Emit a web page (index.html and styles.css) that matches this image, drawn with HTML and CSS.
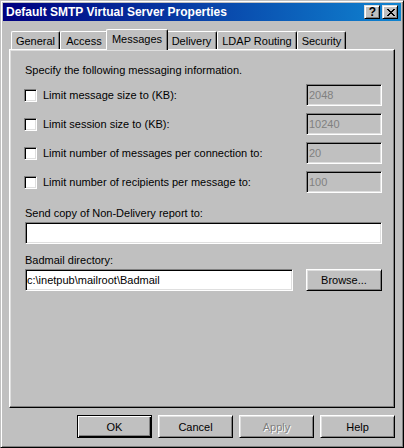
FILE: index.html
```html
<!DOCTYPE html>
<html>
<head>
<meta charset="utf-8">
<link rel="stylesheet" href="styles.css">
</head>
<body>
<div class="window">
  <div class="titlebar">
    <span class="title">Default SMTP Virtual Server Properties</span>
    <div class="caption-btns">
      <div class="cap-btn help">?</div>
      <div class="cap-btn close">
        <svg width="8" height="7" viewBox="0 0 8 7" shape-rendering="crispEdges">
          <rect x="0" y="0" width="2" height="1"/><rect x="6" y="0" width="2" height="1"/>
          <rect x="1" y="1" width="2" height="1"/><rect x="5" y="1" width="2" height="1"/>
          <rect x="2" y="2" width="4" height="1"/>
          <rect x="3" y="3" width="2" height="1"/>
          <rect x="2" y="4" width="4" height="1"/>
          <rect x="1" y="5" width="2" height="1"/><rect x="5" y="5" width="2" height="1"/>
          <rect x="0" y="6" width="2" height="1"/><rect x="6" y="6" width="2" height="1"/>
        </svg>
      </div>
    </div>
  </div>
  <div class="body">
    <div class="tabs">
      <div class="tab w-general">General</div>
      <div class="tab w-access">Access</div>
      <div class="tab selected w-messages">Messages</div>
      <div class="tab w-delivery">Delivery</div>
      <div class="tab w-ldap">LDAP Routing</div>
      <div class="tab w-security">Security</div>
    </div>
    <div class="panel">
      <div class="intro">Specify the following messaging information.</div>
      <div class="opt">
        <span class="check"></span><span class="opt-label">Limit message size to (KB):</span>
        <div class="field disabled">2048</div>
      </div>
      <div class="opt">
        <span class="check"></span><span class="opt-label">Limit session size to (KB):</span>
        <div class="field disabled">10240</div>
      </div>
      <div class="opt">
        <span class="check"></span><span class="opt-label">Limit number of messages per connection to:</span>
        <div class="field disabled">20</div>
      </div>
      <div class="opt">
        <span class="check"></span><span class="opt-label">Limit number of recipients per message to:</span>
        <div class="field disabled">100</div>
      </div>
      <div class="lbl first-lbl">Send copy of Non-Delivery report to:</div>
      <div class="field wide"></div>
      <div class="lbl second-lbl">Badmail directory:</div>
      <div class="dir-row">
        <div class="field dir">c:\inetpub\mailroot\Badmail</div>
        <div class="btn browse">Browse...</div>
      </div>
    </div>
    <div class="buttons">
      <div class="btn default">OK</div>
      <div class="btn">Cancel</div>
      <div class="btn disabled-btn">Apply</div>
      <div class="btn">Help</div>
    </div>
  </div>
</div>
</body>
</html>
```
FILE: styles.css
```css
html, body {
  margin: 0;
  padding: 0;
  background: #c0c0c0;
}
body {
  font-family: "Liberation Sans", Arial, sans-serif;
  font-size: 11px;
  color: #000;
}
.window {
  width: 404px;
  height: 448px;
  box-sizing: border-box;
  border: 1px solid;
  border-color: #c0c0c0 #000 #000 #c0c0c0;
  box-shadow: inset 1px 1px #fff, inset -1px -1px #808080;
  padding: 2px;
  background: #c0c0c0;
  display: flex;
  flex-direction: column;
}
.titlebar {
  height: 18px;
  flex: none;
  background: linear-gradient(to right, #000080, #1084d0);
  display: flex;
  align-items: center;
  padding-left: 3px;
  color: #fff;
  font-weight: bold;
  font-size: 12px;
}
.title {
  flex: 1;
  white-space: nowrap;
}
.caption-btns {
  display: flex;
  gap: 2px;
  margin-right: 3px;
}
.cap-btn {
  width: 16px;
  height: 14px;
  box-sizing: border-box;
  background: #c0c0c0;
  border: 1px solid;
  border-color: #dfdfdf #000 #000 #dfdfdf;
  box-shadow: inset 1px 1px #fff, inset -1px -1px #808080;
  display: flex;
  align-items: center;
  justify-content: center;
  color: #000;
}
.help {
  font-size: 12px;
  font-weight: bold;
  line-height: 12px;
  padding-left: 1px;
}
.close svg {
  fill: #000;
  display: block;
  margin-left: 1px;
}
.body {
  flex: 1;
  display: flex;
  flex-direction: column;
  padding: 8px 6px 0;
}
.tabs {
  height: 20px;
  display: flex;
  align-items: flex-end;
  padding-left: 2px;
}
.tab {
  height: 18px;
  box-sizing: border-box;
  border-left: 1px solid #fff;
  border-top: 1px solid #fff;
  border-right: 1px solid #000;
  border-top-left-radius: 2px;
  border-top-right-radius: 2px;
  box-shadow: inset -1px 0 #808080;
  display: flex;
  align-items: center;
  justify-content: center;
  padding-top: 1px;
  white-space: nowrap;
}
.w-general { width: 49px; }
.w-access { width: 48px; }
.w-messages { width: 62px; }
.w-delivery { width: 51px; }
.w-ldap { width: 80px; }
.w-security { width: 49px; }
.tab.selected {
  height: 21px;
  margin: 0 -2px -1px;
  position: relative;
  z-index: 2;
  background: #c0c0c0;
  padding-top: 0;
  padding-bottom: 2px;
}
.panel {
  height: 359px;
  box-sizing: border-box;
  border: 1px solid;
  border-color: #fff #000 #000 #fff;
  box-shadow: inset -1px -1px #808080, inset 1px 1px #dfdfdf;
  padding: 14px 12px 0 15px;
  display: flex;
  flex-direction: column;
}
.intro {
  line-height: 13px;
}
.opt {
  display: flex;
  align-items: center;
  height: 22px;
  margin-top: 7px;
}
.check {
  width: 13px;
  height: 13px;
  box-sizing: border-box;
  background: #fff;
  border: 1px solid;
  border-color: #808080 #fff #fff #808080;
  box-shadow: inset 1px 1px #000, inset -1px -1px #dfdfdf;
  margin-left: -1px;
  margin-right: 6px;
  flex: none;
}
.opt-label {
  white-space: nowrap;
}
.field {
  height: 22px;
  box-sizing: border-box;
  border: 1px solid;
  border-color: #808080 #fff #fff #808080;
  box-shadow: inset 1px 1px #000, inset -1px -1px #dfdfdf;
  background: #fff;
  display: flex;
  align-items: center;
  padding-left: 2px;
  white-space: nowrap;
}
.field.disabled {
  width: 76px;
  margin-left: auto;
  background: #c0c0c0;
  color: #808080;
}
.lbl {
  line-height: 13px;
}
.first-lbl {
  margin-top: 14px;
}
.second-lbl {
  margin-top: 10px;
}
.field.wide {
  margin-top: 2px;
}
.dir-row {
  display: flex;
  margin-top: 2px;
}
.field.dir {
  width: 268px;
  padding-left: 1px;
}
.btn {
  width: 75px;
  height: 23px;
  box-sizing: border-box;
  background: #c0c0c0;
  border: 1px solid;
  border-color: #fff #000 #000 #fff;
  box-shadow: inset 1px 1px #dfdfdf, inset -1px -1px #808080;
  display: flex;
  align-items: center;
  justify-content: center;
}
.browse {
  margin-left: auto;
  width: 76px;
  height: 22px;
}
.buttons {
  display: flex;
  justify-content: flex-end;
  gap: 6px;
  margin-top: 7px;
}
.btn.default {
  border-color: #000;
  box-shadow: inset 1px 1px #fff, inset -1px -1px #000, inset -2px -2px #808080;
}
.disabled-btn {
  color: #808080;
  text-shadow: 1px 1px #fff;
}
```
